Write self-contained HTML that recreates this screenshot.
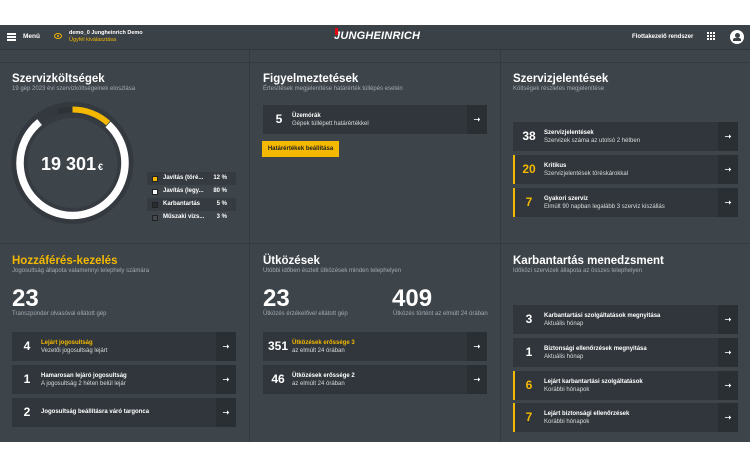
<!DOCTYPE html>
<html><head><meta charset="utf-8"><style>
*{margin:0;padding:0;box-sizing:border-box}
body{width:750px;height:469px;background:#fff;font-family:"Liberation Sans",sans-serif;color:#fff;position:relative;overflow:hidden}
.abs{position:absolute}
#hdr{left:0;top:25px;width:750px;height:25px;background:#3a4147;border-bottom:1px solid #30363b}
#main{left:0;top:50px;width:750px;height:392px;background:#3d444a}
.vl{position:absolute;width:1px;background:#343a3f}
.hl{position:absolute;height:1px;background:#343a3f}
.t{position:absolute;font-weight:bold;font-size:11.5px;white-space:nowrap}
.s{position:absolute;font-size:6px;color:#a4aaaf;white-space:nowrap}
.card{position:absolute;background:#30363b;height:29px}
.card .ar{position:absolute;right:0;top:0;width:20px;height:29px;background:#2a2f33;font-size:8px;line-height:29px;text-align:center;font-weight:bold}
.card .n{position:absolute;top:0;line-height:29px;font-weight:bold;font-size:12px;text-align:center}
.card .l1{position:absolute;font-size:6px;font-weight:bold;top:8px;white-space:nowrap}
.card .l2{position:absolute;font-size:6px;top:16px;color:#d8dbdd;white-space:nowrap}
.card.y{border-left:2px solid #f5b800}
.yel{color:#f5b800}
.big{position:absolute;font-size:24px;font-weight:bold}
.lg{position:absolute;left:147px;width:89px;height:13px;font-size:6px;font-weight:bold;line-height:13px}
.lg i{position:absolute;left:5px;top:3.5px;width:6px;height:6px;border:1px solid #222}
.lg span{position:absolute;left:16px}
.lg b{position:absolute;right:9px}
</style></head><body>
<div id="hdr" class="abs">
 <div class="abs" style="left:7px;top:8px;width:9px;height:1.5px;background:#fff;box-shadow:0 3px 0 #fff,0 6px 0 #fff"></div>
 <div class="abs" style="left:23px;top:8px;font-size:6.5px;font-weight:bold">Menü</div>
 <div class="abs" style="left:54px;top:8px;width:8px;height:6px;border:1.5px solid #f5b800;border-radius:50%"><div class="abs" style="left:1.5px;top:0.5px;width:2px;height:2px;background:#f5b800;border-radius:50%"></div></div>
 <div class="abs" style="left:69px;top:5px;font-size:5.5px;font-weight:bold">demo_0 Jungheinrich Demo</div>
 <div class="abs yel" style="left:69px;top:12px;font-size:5.5px">Ügyfél kiválasztása</div>
 <div class="abs" style="left:334px;top:5px;font-size:11px;font-weight:bold;font-style:italic;letter-spacing:0.2px">JUNGHEINRICH</div>
 <div class="abs" style="left:335px;top:3px;width:3px;height:7px;background:#e30613"></div>
 <div class="abs" style="left:632px;top:9px;font-size:6px;font-weight:bold">Flottakezelő rendszer</div>
 <div class="abs" style="left:707px;top:7px;width:2px;height:2px;background:#fff;box-shadow:3px 0 #fff,6px 0 #fff,0 3px #fff,3px 3px #fff,6px 3px #fff,0 6px #fff,3px 6px #fff,6px 6px #fff"></div>
 <div class="abs" style="left:730px;top:5px;width:14px;height:14px;border-radius:50%;background:#fff"><div class="abs" style="left:4.5px;top:3px;width:5px;height:5px;border-radius:50%;background:#3a4147"></div><div class="abs" style="left:3px;top:8px;width:8px;height:3px;background:#3a4147;border-radius:2px 2px 0 0"></div></div>
</div>
<div id="main" class="abs">
 <div class="hl" style="left:0;top:12px;width:750px"></div>
 <div class="hl" style="left:0;top:193px;width:750px"></div>
 <div class="vl" style="left:249px;top:0;height:392px"></div>
 <div class="vl" style="left:500px;top:0;height:392px"></div>
</div>
<!-- panel 1 -->
<div class="t" style="left:12px;top:73px">Szervizköltségek</div>
<div class="s" style="left:12px;top:86px">19 gép 2023 évi szervizköltségeinek eloszlása</div>
<svg class="abs" style="left:0;top:90px" width="150" height="150">
 <circle cx="72.5" cy="73" r="61" fill="#33393e"/>
 <circle cx="72.5" cy="73" r="49" fill="#353b40"/>
 <circle cx="72.5" cy="73" r="45" fill="#3d444a"/>
 <circle cx="72.5" cy="73" r="52.5" fill="none" stroke="#fff" stroke-width="7.5" stroke-dasharray="255 330" stroke-dashoffset="-39" transform="rotate(-90 72.5 73)"/>
 <circle cx="72.5" cy="73" r="53.5" fill="none" stroke="#f5b800" stroke-width="6" stroke-dasharray="39 330" transform="rotate(-90 72.5 73)"/>
 <circle cx="72.5" cy="73" r="53.5" fill="none" stroke="#5a6066" stroke-width="6" stroke-dasharray="9 330" stroke-dashoffset="9" transform="rotate(-90 72.5 73)"/>
 <circle cx="72.5" cy="73" r="53.5" fill="none" stroke="#2d3237" stroke-width="6" stroke-dasharray="17 330" stroke-dashoffset="26" transform="rotate(-90 72.5 73)"/>
 <text x="72" y="80" text-anchor="middle" font-family="Liberation Sans" font-weight="bold" font-size="18" fill="#fff">19 301<tspan font-size="9" dx="2">€</tspan></text>
</svg>
<div class="lg" style="top:172px;background:#353b40"><i style="background:#f5b800"></i><span>Javítás (töré...</span><b>12 %</b></div>
<div class="lg" style="top:185px"><i style="background:#fff"></i><span>Javítás (legy...</span><b>80 %</b></div>
<div class="lg" style="top:198px;background:#353b40"><i style="background:#2a2f33"></i><span>Karbantartás</span><b>5 %</b></div>
<div class="lg" style="top:211px"><i style="background:#444a50"></i><span>Műszaki vizs...</span><b>3 %</b></div>
<!-- panel 2 -->
<div class="t" style="left:263px;top:73px">Figyelmeztetések</div>
<div class="s" style="left:263px;top:86px">Értesítések megjelenítése határérték túllépés esetén</div>
<div class="card" style="left:263px;top:105px;width:224px"><div class="n" style="left:10px;width:12px">5</div><div class="l1" style="left:29px">Üzemórák</div><div class="l2" style="left:29px">Gépek túllépett határértékkel</div><div class="ar">➝</div></div>
<div class="abs" style="left:262px;top:141px;width:77px;height:16px;background:#f5b800;color:#222;font-size:6px;line-height:16px;text-align:center;font-weight:bold">Határértékek beállítása</div>
<!-- panel 3 -->
<div class="t" style="left:513px;top:73px">Szervizjelentések</div>
<div class="s" style="left:513px;top:86px">Költségek részletes megjelenítése</div>
<div class="card" style="left:513px;top:122px;width:225px"><div class="n" style="left:5px;width:22px">38</div><div class="l1" style="left:31px">Szervizjelentések</div><div class="l2" style="left:31px">Szervizek száma az utolsó 2 hétben</div><div class="ar">➝</div></div>
<div class="card y" style="left:513px;top:155px;width:225px"><div class="n yel" style="left:3px;width:22px">20</div><div class="l1" style="left:29px">Kritikus</div><div class="l2" style="left:29px">Szervizjelentések töréskárokkal</div><div class="ar">➝</div></div>
<div class="card y" style="left:513px;top:188px;width:225px"><div class="n yel" style="left:3px;width:22px">7</div><div class="l1" style="left:29px">Gyakori szerviz</div><div class="l2" style="left:29px">Elmúlt 90 napban legalább 3 szerviz kiszállás</div><div class="ar">➝</div></div>
<!-- panel 4 -->
<div class="t yel" style="left:12px;top:255px">Hozzáférés-kezelés</div>
<div class="s" style="left:12px;top:268px">Jogosultság állapota valamennyi telephely számára</div>
<div class="big" style="left:12px;top:285px">23</div>
<div class="s" style="left:12px;top:311px">Transzponder olvasóval ellátott gép</div>
<div class="card" style="left:12px;top:332px;width:224px"><div class="n" style="left:8px;width:14px">4</div><div class="l1 yel" style="left:29px">Lejárt jogosultság</div><div class="l2" style="left:29px">Vezetői jogosultság lejárt</div><div class="ar">➝</div></div>
<div class="card" style="left:12px;top:365px;width:224px"><div class="n" style="left:8px;width:14px">1</div><div class="l1" style="left:29px">Hamarosan lejáró jogosultság</div><div class="l2" style="left:29px">A jogosultság 2 héten belül lejár</div><div class="ar">➝</div></div>
<div class="card" style="left:12px;top:398px;width:224px"><div class="n" style="left:8px;width:14px">2</div><div class="l1" style="left:29px;top:11px">Jogosultság beállításra váró targonca</div><div class="ar">➝</div></div>
<!-- panel 5 -->
<div class="t" style="left:263px;top:255px">Ütközések</div>
<div class="s" style="left:263px;top:268px">Utóbbi időben észlelt ütközések minden telephelyen</div>
<div class="big" style="left:263px;top:285px">23</div>
<div class="s" style="left:263px;top:311px">Ütközés érzékelővel ellátott gép</div>
<div class="big" style="left:392px;top:285px">409</div>
<div class="s" style="left:393px;top:311px">Ütközés történt az elmúlt 24 órában</div>
<div class="card" style="left:263px;top:332px;width:224px"><div class="n" style="left:2px;width:26px">351</div><div class="l1 yel" style="left:29px">Ütközések erőssége 3</div><div class="l2" style="left:29px">az elmúlt 24 órában</div><div class="ar">➝</div></div>
<div class="card" style="left:263px;top:365px;width:224px"><div class="n" style="left:2px;width:26px">46</div><div class="l1" style="left:29px">Ütközések erőssége 2</div><div class="l2" style="left:29px">az elmúlt 24 órában</div><div class="ar">➝</div></div>
<!-- panel 6 -->
<div class="t" style="left:513px;top:255px">Karbantartás menedzsment</div>
<div class="s" style="left:513px;top:268px">Időközi szervizek állapota az összes telephelyen</div>
<div class="card" style="left:513px;top:305px;width:225px"><div class="n" style="left:6px;width:20px">3</div><div class="l1" style="left:31px">Karbantartási szolgáltatások megnyitása</div><div class="l2" style="left:31px">Aktuális hónap</div><div class="ar">➝</div></div>
<div class="card" style="left:513px;top:338px;width:225px"><div class="n" style="left:6px;width:20px">1</div><div class="l1" style="left:31px">Biztonsági ellenőrzések megnyitása</div><div class="l2" style="left:31px">Aktuális hónap</div><div class="ar">➝</div></div>
<div class="card y" style="left:513px;top:371px;width:225px"><div class="n yel" style="left:4px;width:20px">6</div><div class="l1" style="left:29px">Lejárt karbantartási szolgáltatások</div><div class="l2" style="left:29px">Korábbi hónapok</div><div class="ar">➝</div></div>
<div class="card y" style="left:513px;top:403px;width:225px"><div class="n yel" style="left:4px;width:20px">7</div><div class="l1" style="left:29px">Lejárt biztonsági ellenőrzések</div><div class="l2" style="left:29px">Korábbi hónapok</div><div class="ar">➝</div></div>
</body></html>
